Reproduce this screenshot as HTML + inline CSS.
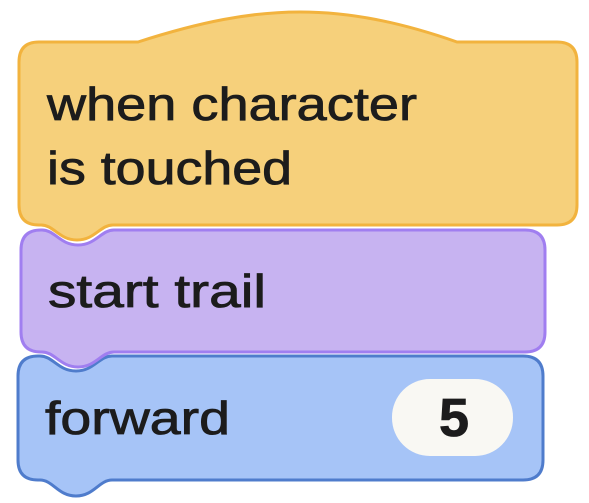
<!DOCTYPE html>
<html><head><style>
html,body{margin:0;padding:0;background:#fff;width:589px;height:503px;overflow:hidden}
svg{display:block}
text{font-family:"Liberation Sans",sans-serif;fill:#1c1c1c;stroke:#1c1c1c;stroke-width:0.8}
</style></head><body>
<svg width="589" height="503" viewBox="0 0 589 503">
<path d="M18,376 Q18,356 38,356 L40,356 C53,356 58,371 76,371 C94,371 99,356 112,356 L523,356 Q543,356 543,376 L543,460 Q543,480 523,480 L112,480 C99,480 94,496 76,496 C58,496 53,480 40,480 L38,480 Q18,480 18,460 Z" fill="#a6c4f7" stroke="#4f7ccc" stroke-width="3"/>
<rect x="392" y="379" width="121" height="77" rx="38" fill="#f9f8f3"/>
<text x="454" y="436" font-size="54" font-weight="bold" text-anchor="middle" fill="#111" stroke-width="0">5</text>
<text x="45" y="434" font-size="46" textLength="185" lengthAdjust="spacingAndGlyphs">forward</text>
<path d="M21,250 Q21,230 41,230 L42,230 C55,230 60,245 78,245 C96,245 101,230 114,230 L525,230 Q545,230 545,250 L545,332 Q545,352 525,352 L114,352 C101,352 96,367 78,367 C60,367 55,352 42,352 L41,352 Q21,352 21,332 Z" fill="#c7b3f1" stroke="#a07ef0" stroke-width="3"/>
<text x="48" y="307" font-size="46" textLength="218" lengthAdjust="spacingAndGlyphs">start trail</text>
<path d="M19,62 Q19,42 39,42 L138,42 C200,22 250,12 300,12 C350,12 400,22 457,42 L557,42 Q577,42 577,62 L577,205 Q577,225 557,225 L113,225 C100,225 95,240 77,240 C59,240 54,225 41,225 L39,225 Q19,225 19,205 Z" fill="#f6d07b" stroke="#f2b33e" stroke-width="3"/>
<text x="47" y="120" font-size="46" textLength="370" lengthAdjust="spacingAndGlyphs">when character</text>
<text x="47" y="184" font-size="46" textLength="245" lengthAdjust="spacingAndGlyphs">is touched</text>
</svg>
</body></html>
